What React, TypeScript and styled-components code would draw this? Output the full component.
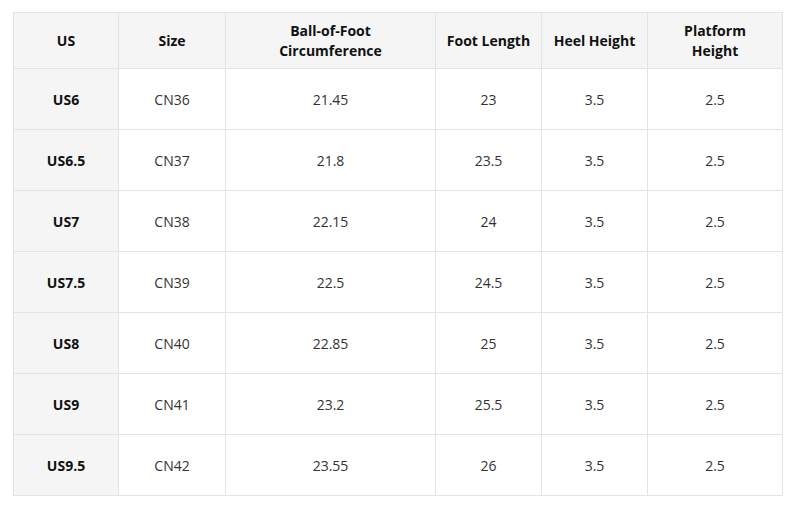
import React from "react";
import styled, { createGlobalStyle } from "styled-components";

const Global = createGlobalStyle`
  html, body { margin: 0; padding: 0; background: #fff; }
  body { font-family: "Open Sans", "Noto Sans", sans-serif; color: #222; }
`;

const Page = styled.div`
  padding: 12px 0 0 13px;
`;

const Table = styled.table`
  border-collapse: collapse;
  table-layout: fixed;
  width: 769px;
  font-size: 14px;
`;

const Th = styled.th`
  background: #f5f5f5;
  border: 1px solid #e3e3e3;
  height: 56px;
  padding: 0 6px;
  font-weight: 700;
  line-height: 20px;
  color: #111;
  text-align: center;
  box-sizing: border-box;
`;

const Td = styled.td<{ $head?: boolean }>`
  border: 1px solid #e3e3e3;
  height: 61px;
  padding: 0 6px;
  text-align: center;
  box-sizing: border-box;
  background: ${(p) => (p.$head ? "#f5f5f5" : "#fff")};
  font-weight: ${(p) => (p.$head ? 700 : 400)};
  color: ${(p) => (p.$head ? "#111" : "#333")};
`;

const widths = [105, 107, 210, 106, 106, 135];
const headers = ["US", "Size", "Ball-of-Foot\nCircumference", "Foot Length", "Heel Height", "Platform\nHeight"];
const rows = [
  ["US6", "CN36", "21.45", "23", "3.5", "2.5"],
  ["US6.5", "CN37", "21.8", "23.5", "3.5", "2.5"],
  ["US7", "CN38", "22.15", "24", "3.5", "2.5"],
  ["US7.5", "CN39", "22.5", "24.5", "3.5", "2.5"],
  ["US8", "CN40", "22.85", "25", "3.5", "2.5"],
  ["US9", "CN41", "23.2", "25.5", "3.5", "2.5"],
  ["US9.5", "CN42", "23.55", "26", "3.5", "2.5"],
];

export default function App() {
  return (
    <>
      <Global />
      <Page>
        <Table>
          <colgroup>
            {widths.map((w, i) => (
              <col key={i} style={{ width: w }} />
            ))}
          </colgroup>
          <thead>
            <tr>
              {headers.map((h, i) => (
                <Th key={i}>
                  {h.split("\n").map((l, j) => (
                    <React.Fragment key={j}>
                      {j > 0 && <br />}
                      {l}
                    </React.Fragment>
                  ))}
                </Th>
              ))}
            </tr>
          </thead>
          <tbody>
            {rows.map((r, i) => (
              <tr key={i}>
                {r.map((c, j) => (
                  <Td key={j} $head={j === 0}>
                    {c}
                  </Td>
                ))}
              </tr>
            ))}
          </tbody>
        </Table>
      </Page>
    </>
  );
}
